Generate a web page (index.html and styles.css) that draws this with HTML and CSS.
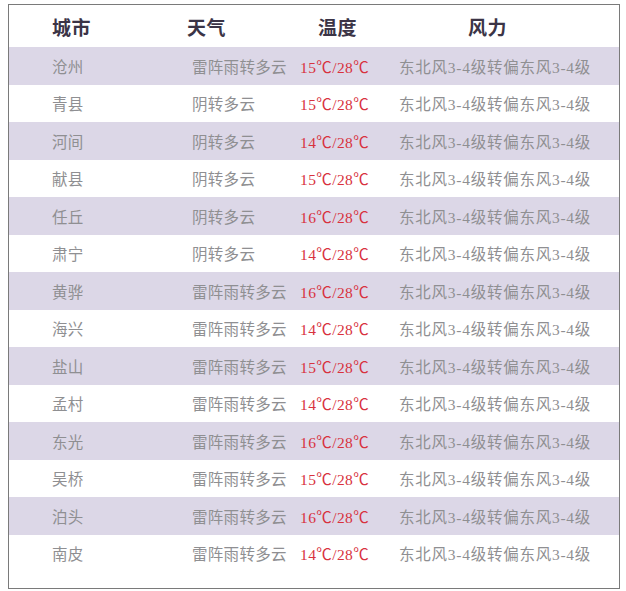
FILE: index.html
```html
<!DOCTYPE html>
<html lang="zh">
<head>
<meta charset="utf-8">
<title>天气预报</title>
<link rel="stylesheet" href="styles.css">
</head>
<body>
<div class="frame">
  <div class="row head">
    <div class="h-city">城市</div>
    <div class="h-weather">天气</div>
    <div class="h-temp">温度</div>
    <div class="h-wind">风力</div>
  </div>
  <div class="row band"><div>沧州</div><div>雷阵雨转多云</div><div class="temp">15℃/28℃</div><div class="wind">东北风3-4级转偏东风3-4级</div></div>
  <div class="row"><div>青县</div><div>阴转多云</div><div class="temp">15℃/28℃</div><div class="wind">东北风3-4级转偏东风3-4级</div></div>
  <div class="row band"><div>河间</div><div>阴转多云</div><div class="temp">14℃/28℃</div><div class="wind">东北风3-4级转偏东风3-4级</div></div>
  <div class="row"><div>献县</div><div>阴转多云</div><div class="temp">15℃/28℃</div><div class="wind">东北风3-4级转偏东风3-4级</div></div>
  <div class="row band"><div>任丘</div><div>阴转多云</div><div class="temp">16℃/28℃</div><div class="wind">东北风3-4级转偏东风3-4级</div></div>
  <div class="row"><div>肃宁</div><div>阴转多云</div><div class="temp">14℃/28℃</div><div class="wind">东北风3-4级转偏东风3-4级</div></div>
  <div class="row band"><div>黄骅</div><div>雷阵雨转多云</div><div class="temp">16℃/28℃</div><div class="wind">东北风3-4级转偏东风3-4级</div></div>
  <div class="row"><div>海兴</div><div>雷阵雨转多云</div><div class="temp">14℃/28℃</div><div class="wind">东北风3-4级转偏东风3-4级</div></div>
  <div class="row band"><div>盐山</div><div>雷阵雨转多云</div><div class="temp">15℃/28℃</div><div class="wind">东北风3-4级转偏东风3-4级</div></div>
  <div class="row"><div>孟村</div><div>雷阵雨转多云</div><div class="temp">14℃/28℃</div><div class="wind">东北风3-4级转偏东风3-4级</div></div>
  <div class="row band"><div>东光</div><div>雷阵雨转多云</div><div class="temp">16℃/28℃</div><div class="wind">东北风3-4级转偏东风3-4级</div></div>
  <div class="row"><div>吴桥</div><div>雷阵雨转多云</div><div class="temp">15℃/28℃</div><div class="wind">东北风3-4级转偏东风3-4级</div></div>
  <div class="row band"><div>泊头</div><div>雷阵雨转多云</div><div class="temp">16℃/28℃</div><div class="wind">东北风3-4级转偏东风3-4级</div></div>
  <div class="row"><div>南皮</div><div>雷阵雨转多云</div><div class="temp">14℃/28℃</div><div class="wind">东北风3-4级转偏东风3-4级</div></div>
</div>
</body>
</html>
```

FILE: styles.css
```css
html, body {
  margin: 0;
  padding: 0;
  background: #ffffff;
}

body {
  font-family: "Liberation Serif", "Noto Sans CJK SC", serif;
}

.frame {
  box-sizing: border-box;
  width: 612px;
  height: 585px;
  margin: 4px 0 0 8px;
  border: 1px solid #7a7a7a;
  padding-bottom: 15px;
  background: #ffffff;
}

.row {
  display: grid;
  grid-template-columns: 140px 108px 99px 1fr;
  align-items: center;
  height: 37.5px;
  padding-left: 43px;
  font-size: 15.5px;
  color: #8f8f92;
  white-space: nowrap;
  letter-spacing: 0.3px;
}

.band {
  background: #dcd7e7;
}

.temp {
  color: #d8323e;
  letter-spacing: 0.4px;
}

.wind {
  letter-spacing: 0.75px;
}

.head {
  height: 42px;
  font-size: 19px;
  font-weight: bold;
  color: #3b3446;
  letter-spacing: 0.5px;
}

.h-weather {
  margin-left: -5px;
}

.h-temp {
  margin-left: 18px;
}

.h-wind {
  margin-left: 69px;
}
```
